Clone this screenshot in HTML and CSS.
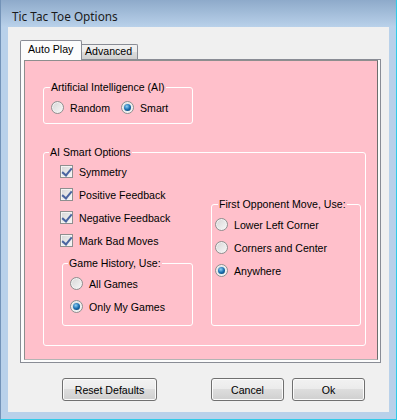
FILE: index.html
```html
<!doctype html>
<html>
<head>
    <meta charset="utf-8"/>
    <title>Tic Tac Toe Options</title>
    <link rel="stylesheet" href="styles.css">
</head>
<body>
<div class="window">
    <div class="titlebar">Tic Tac Toe Options</div>
    <div class="client">
        <div class="tabstrip">
            <div class="tab active">Auto Play</div>
            <div class="tab">Advanced</div>
        </div>
        <div class="tabpage">
            <div class="page">
                <fieldset class="grp grp-ai">
                    <legend>Artificial Intelligence (AI)</legend>
                    <label class="opt"><input type="radio" name="ai">Random</label>
                    <label class="opt"><input type="radio" name="ai" checked>Smart</label>
                </fieldset>

                <fieldset class="grp grp-smart">
                    <legend>AI Smart Options</legend>
                    <div class="col-left">
                        <label class="row"><input type="checkbox" checked>Symmetry</label>
                        <label class="row"><input type="checkbox" checked>Positive Feedback</label>
                        <label class="row"><input type="checkbox" checked>Negative Feedback</label>
                        <label class="row"><input type="checkbox" checked>Mark Bad Moves</label>

                        <fieldset class="grp grp-history">
                            <legend>Game History, Use:</legend>
                            <label class="row"><input type="radio" name="hist">All Games</label>
                            <label class="row"><input type="radio" name="hist" checked>Only My Games</label>
                        </fieldset>
                    </div>

                    <fieldset class="grp grp-first">
                        <legend>First Opponent Move, Use:</legend>
                        <label class="row"><input type="radio" name="first">Lower Left Corner</label>
                        <label class="row"><input type="radio" name="first">Corners and Center</label>
                        <label class="row"><input type="radio" name="first" checked>Anywhere</label>
                    </fieldset>
                </fieldset>
            </div>
        </div>

        <div class="buttons">
            <button class="btn btn-reset">Reset Defaults</button>
            <button class="btn btn-cancel">Cancel</button>
            <button class="btn btn-ok">Ok</button>
        </div>
    </div>
</div>
</body>
</html>
```

FILE: styles.css
```css
* {
    box-sizing:border-box;
}
html, body {
    margin:0;
    padding:0;
}
body {
    width:397px;
    height:420px;
    font-family:"Liberation Sans", Arial, sans-serif;
    font-size:10.6px;
    color:#000000;
}

/* window frame */
.window {
    height:420px;
    background-color:#b9d1ea;
    border-left:1px solid #7393b8;
    border-right:1px solid #2fcbe8;
    border-bottom:1px solid #2fcbe8;
    padding-bottom:7px;
}
.titlebar {
    height:27px;
    padding:7px 0 0 11px;
    line-height:18px;
    font-family:"Noto Sans", sans-serif;
    font-size:11.8px;
    color:#1b1b1b;
    background-image:linear-gradient(#8eaaca, #b9d1ea);
}
.client {
    height:385px;
    margin:0 7px;
    background-color:#f0f0f0;
}

/* tabs */
.tabstrip {
    display:flex;
    align-items:flex-end;
    padding:13px 0 0 12px;
}
.tab {
    width:56px;
    height:15px;
    padding-left:3px;
    line-height:13px;
    border:1px solid #898c95;
    border-left:none;
    border-bottom:none;
    border-radius:0 2px 0 0;
    background-image:linear-gradient(#f2f2f2, #ebebeb 50%, #dddddd 50%, #cfcfcf);
}
.tab.active {
    position:relative;
    z-index:1;
    width:62px;
    height:20px;
    margin-bottom:-1px;
    padding-left:7px;
    line-height:17px;
    border-left:1px solid #898c95;
    border-radius:2px 2px 0 0;
    background:#fcfcfc;
}
.tabpage {
    width:361px;
    height:304px;
    margin-left:12px;
    padding:0 2px 2px 3px;
    border:1px solid #898c95;
    background-color:#fcfcfc;
}
.page {
    height:100%;
    padding-left:18px;
    border:1px solid #8e8e8e;
    border-right-color:#6d6d6d;
    border-bottom-color:#b4b4b4;
    background-color:#ffc0cb;
}

/* group boxes */
.grp {
    margin:0;
    min-width:0;
    border:1px solid #ffffff;
    border-radius:3px;
}
.grp legend {
    padding:0 1px;
    line-height:13px;
}
.grp-ai {
    display:flex;
    align-items:center;
    width:150px;
    margin-top:20px;
    padding:7px 6px 9px 7px;
}
.grp-ai legend { margin-left:-1px; }
.opt {
    display:flex;
    align-items:center;
    gap:6px;
    height:13px;
    margin-right:11px;
}
.grp-smart {
    display:flex;
    align-items:flex-end;
    gap:18px;
    width:323px;
    margin-top:22px;
    padding:1px 4px 19px 16px;
}
.grp-smart > legend { margin-left:-11px; }
.col-left { width:133px; }
.row {
    display:flex;
    align-items:center;
    gap:6px;
    height:23px;
    white-space:nowrap;
}
.grp-history {
    width:131px;
    margin:5px 0 0 2px;
    padding:2px 4px 7px 7px;
}
.grp-history legend { margin-left:-2px; }
.grp-first {
    width:150px;
    padding:2px 4px 43px 3px;
}
.grp-first legend { margin-left:3px; }

/* win7 style radios and checkboxes */
input {
    -webkit-appearance:none;
    appearance:none;
    position:relative;
    flex:none;
    width:13px;
    height:13px;
    margin:0;
    border:1px solid #8e8f8f;
    background-image:linear-gradient(135deg, #d6d6d6, #f8f8f8);
}
input[type=radio] {
    border-radius:50%;
    box-shadow:inset 0 0 0 1px #f2f2f2;
}
input[type=radio]:checked::after {
    content:"";
    position:absolute;
    left:2px;
    top:2px;
    width:7px;
    height:7px;
    border-radius:50%;
    background-image:radial-gradient(circle at 40% 35%, #8fd0f5, #1a6fb0 50%, #07325a);
}
input[type=checkbox] {
    box-shadow:inset 0 0 0 1px #f4f4f4;
}
input[type=checkbox]:checked::after {
    content:"";
    position:absolute;
    left:3px;
    top:0;
    width:4px;
    height:8px;
    border:solid #4a64a0;
    border-width:0 2px 2px 0;
    transform:rotate(40deg);
}

/* buttons */
.buttons {
    display:flex;
    padding:15px 0 0 54px;
}
.btn {
    height:23px;
    padding:0;
    font-family:inherit;
    font-size:10.6px;
    color:#000000;
    border:1px solid #707070;
    border-radius:3px;
    box-shadow:inset 0 0 0 1px #fbfbfb;
    background-image:linear-gradient(#f2f2f2, #ebebeb 50%, #dddddd 50%, #cfcfcf);
}
.btn-reset { width:95px; }
.btn-cancel { width:73px; margin-left:54px; }
.btn-ok { width:73px; margin-left:8px; }
```
